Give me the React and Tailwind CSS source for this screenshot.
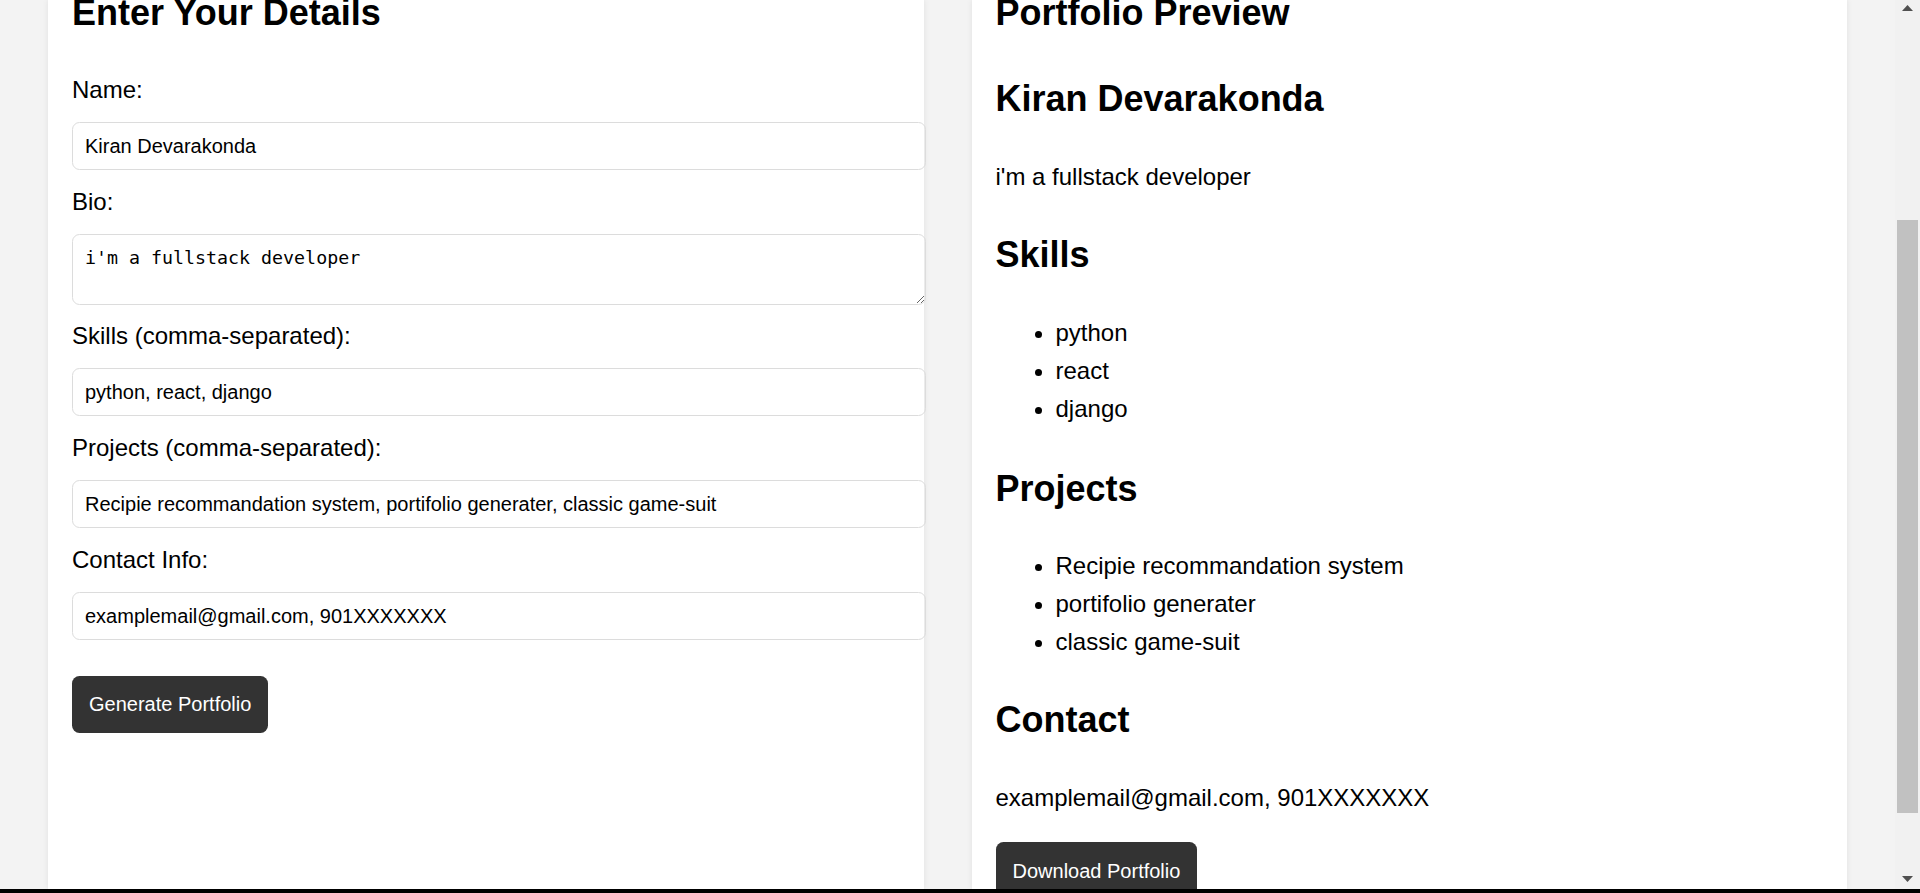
import React from "react";

const fields = [
  { label: "Name:", value: "Kiran Devarakonda" },
  { label: "Bio:", value: "i'm a fullstack developer", area: true },
  { label: "Skills (comma-separated):", value: "python, react, django" },
  {
    label: "Projects (comma-separated):",
    value: "Recipie recommandation system, portifolio generater, classic game-suit",
  },
  { label: "Contact Info:", value: "examplemail@gmail.com, 901XXXXXXX" },
];

const skills = ["python", "react", "django"];
const projects = ["Recipie recommandation system", "portifolio generater", "classic game-suit"];

function Scrollbar() {
  return (
    <div className="flex w-[25px] flex-col bg-[#f1f1f1]">
      <div className="flex h-[17px] items-start justify-center pt-[5px]">
        <svg width="11" height="6" viewBox="0 0 11 6">
          <polygon points="5.5,0 11,6 0,6" fill="#505050" />
        </svg>
      </div>
      <div className="mx-[2px] mt-[203px] h-[593px] bg-[#c1c1c1]" />
      <div className="flex-1" />
      <div className="flex h-[17px] items-start justify-center pt-[4px]">
        <svg width="11" height="6" viewBox="0 0 11 6">
          <polygon points="0,0 11,0 5.5,6" fill="#505050" />
        </svg>
      </div>
    </div>
  );
}

export default function App() {
  return (
    <div className="flex h-[893px] w-full flex-col overflow-hidden font-['Liberation_Sans',Arial,sans-serif] text-black">
      <div className="flex h-[889px]">
        <div className="flex flex-1 gap-[48px] bg-[#f3f3f3] px-[48px]">
          {/* Form panel */}
          <section className="flex-1 bg-white px-[24px] shadow-[0_0_6px_rgba(0,0,0,0.08)]">
            <h2 className="-mt-[8px] text-[36px] font-bold leading-[41px]">Enter Your Details</h2>
            <div className="mt-[42.7px]">
              {fields.map((f, i) => (
                <div key={f.label} className={i === 0 ? "" : "mt-[17.6px]"}>
                  <label className="block text-[24px] leading-[28px]">{f.label}</label>
                  {f.area ? (
                    <textarea
                      defaultValue={f.value}
                      className="mt-[18.3px] box-content block h-[44.7px] w-full rounded-[7.5px] border border-[#dcdcdc] px-[12px] py-[12px] font-['DejaVu_Sans_Mono',monospace] text-[18.3px] leading-[22px] outline-none"
                    />
                  ) : (
                    <input
                      defaultValue={f.value}
                      className="mt-[18.3px] box-content block h-[22px] w-full rounded-[7.5px] border border-[#dcdcdc] px-[12px] py-[12px] text-[20px] leading-[22px] outline-none"
                    />
                  )}
                </div>
              ))}
            </div>
            <button className="mt-[35.5px] h-[57px] rounded-[7.5px] bg-[#333333] px-[17px] text-[20px] text-white">
              Generate Portfolio
            </button>
          </section>

          {/* Preview panel */}
          <section className="flex-1 bg-white px-[24px] shadow-[0_0_6px_rgba(0,0,0,0.08)]">
            <h2 className="-mt-[8px] text-[36px] font-bold leading-[41px]">Portfolio Preview</h2>
            <h2 className="mt-[45px] text-[36px] font-bold leading-[41px]">Kiran Devarakonda</h2>
            <p className="mt-[44px] text-[24px] leading-[28px]">i'm a fullstack developer</p>

            <h2 className="mt-[43px] text-[36px] font-bold leading-[41px]">Skills</h2>
            <ul className="mt-[39.4px] list-disc pl-[60px] text-[24px] leading-[38px]">
              {skills.map((s) => (
                <li key={s}>{s}</li>
              ))}
            </ul>

            <h2 className="mt-[39.3px] text-[36px] font-bold leading-[41px]">Projects</h2>
            <ul className="mt-[38px] list-disc pl-[60px] text-[24px] leading-[38px]">
              {projects.map((p) => (
                <li key={p}>{p}</li>
              ))}
            </ul>

            <h2 className="mt-[38px] text-[36px] font-bold leading-[41px]">Contact</h2>
            <p className="mt-[44px] text-[24px] leading-[28px]">examplemail@gmail.com, 901XXXXXXX</p>
            <button className="mt-[30.6px] h-[57px] rounded-[7.5px] bg-[#333333] px-[17px] text-[20px] text-white">
              Download Portfolio
            </button>
          </section>
        </div>
        <Scrollbar />
      </div>
      <div className="h-[4px] bg-black" />
    </div>
  );
}
